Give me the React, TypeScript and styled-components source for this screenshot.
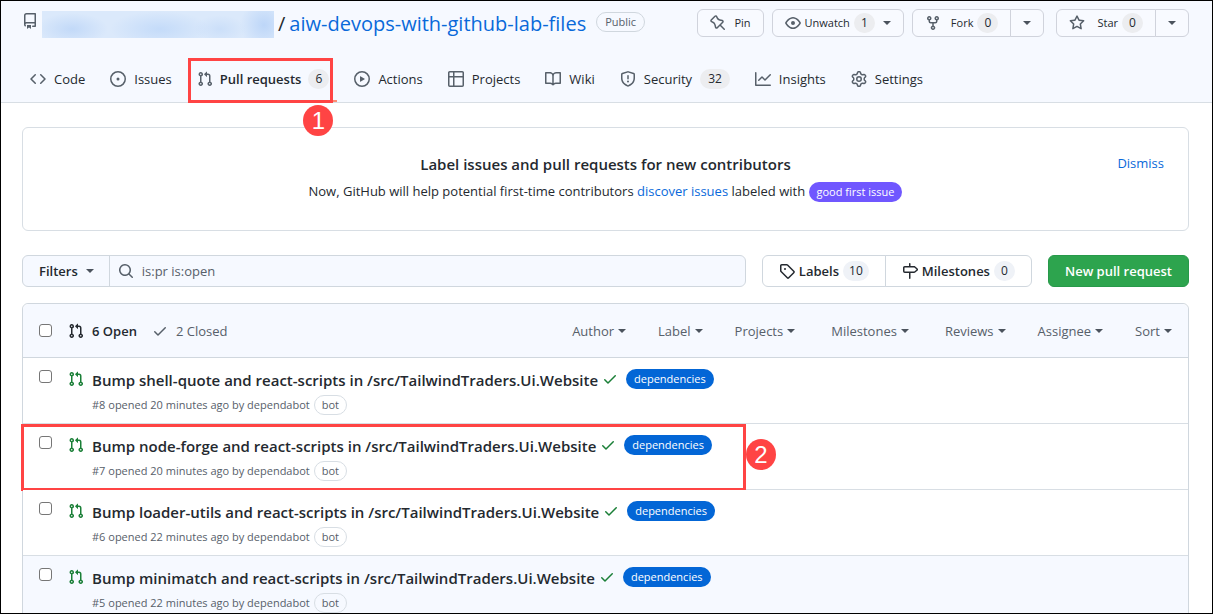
import React from "react";
import styled, { createGlobalStyle } from "styled-components";

const GlobalStyle = createGlobalStyle`
  *, *::before, *::after { box-sizing: border-box; }
  body {
    margin: 0;
    background: #ffffff;
    color: #24292f;
    font-family: "Open Sans", "Noto Sans", sans-serif;
    font-size: 13px;
    line-height: 20px;
  }
  button, input { font: inherit; color: inherit; }
  a { text-decoration: none; }
  h1, h2, h3, p, ul { margin: 0; padding: 0; font-size: inherit; }
  ul { list-style: none; }
`;

const icons = {
  repo: "M2 2.5A2.5 2.5 0 014.5 0h8.75a.75.75 0 01.75.75v12.5a.75.75 0 01-.75.75h-2.5a.75.75 0 110-1.5h1.75v-2h-8a1 1 0 00-.714 1.7.75.75 0 01-1.072 1.05A2.495 2.495 0 012 11.5v-9zm10.5-1V9h-8c-.356 0-.694.074-1 .208V2.5a1 1 0 011-1h8zM5 12.25v3.25a.25.25 0 00.4.2l1.45-1.087a.25.25 0 01.3 0L8.6 15.7a.25.25 0 00.4-.2v-3.25a.25.25 0 00-.25-.25h-3.5a.25.25 0 00-.25.25z",
  code: "M4.72 3.22a.75.75 0 011.06 1.06L2.06 8l3.72 3.72a.75.75 0 11-1.06 1.06L.47 8.53a.75.75 0 010-1.06l4.25-4.25zm6.56 0a.75.75 0 10-1.06 1.06L13.94 8l-3.72 3.72a.75.75 0 101.06 1.06l4.25-4.25a.75.75 0 000-1.06l-4.25-4.25z",
  issue: "M8 9.5a1.5 1.5 0 100-3 1.5 1.5 0 000 3zM8 0a8 8 0 100 16A8 8 0 008 0zM1.5 8a6.5 6.5 0 1113 0 6.5 6.5 0 01-13 0z",
  pull: "M7.177 3.073L9.573.677A.25.25 0 0110 .854v4.792a.25.25 0 01-.427.177L7.177 3.427a.25.25 0 010-.354zM3.75 2.5a.75.75 0 100 1.5.75.75 0 000-1.5zm-2.25.75a2.25 2.25 0 113 2.122v5.256a2.251 2.251 0 11-1.5 0V5.372A2.25 2.25 0 011.5 3.25zM11 2.5h-1V4h1a1 1 0 011 1v5.628a2.251 2.251 0 101.5 0V5A2.5 2.5 0 0011 2.5zm1 10.25a.75.75 0 111.5 0 .75.75 0 01-1.5 0zM3.75 12a.75.75 0 100 1.5.75.75 0 000-1.5z",
  play: "M1.5 8a6.5 6.5 0 1113 0 6.5 6.5 0 01-13 0zM8 0a8 8 0 100 16A8 8 0 008 0zM6.379 5.227A.25.25 0 006 5.442v5.117a.25.25 0 00.379.214l4.264-2.559a.25.25 0 000-.428L6.379 5.227z",
  table: "M0 1.75C0 .784.784 0 1.75 0h12.5C15.216 0 16 .784 16 1.75v12.5A1.75 1.75 0 0114.25 16H1.75A1.75 1.75 0 010 14.25V1.75zM1.5 6.5v7.75c0 .138.112.25.25.25H5v-8H1.5zM5 5H1.5V1.75a.25.25 0 01.25-.25H5V5zm1.5 1.5v8h7.75a.25.25 0 00.25-.25V6.5h-8zm8-1.5h-8V1.5h7.75a.25.25 0 01.25.25V5z",
  book: "M0 1.75A.75.75 0 01.75 1h4.253c1.227 0 2.317.59 3 1.501A3.744 3.744 0 0111.006 1h4.245a.75.75 0 01.75.75v10.5a.75.75 0 01-.75.75h-4.507a2.25 2.25 0 00-1.591.659l-.622.621a.75.75 0 01-1.06 0l-.622-.621A2.25 2.25 0 005.258 13H.75a.75.75 0 01-.75-.75V1.75zm8.755 3a2.25 2.25 0 012.25-2.25H14.5v9h-3.757c-.71 0-1.4.201-1.992.572l.004-7.322zm-1.504 7.324l.004-5.073-.002-2.253A2.25 2.25 0 005.003 2.5H1.5v9h3.757a3.75 3.75 0 011.994.574z",
  shield: "M7.467.133a1.75 1.75 0 011.066 0l5.25 1.68A1.75 1.75 0 0115 3.48V7c0 1.566-.32 3.182-1.303 4.682-.983 1.498-2.585 2.813-5.032 3.855a1.7 1.7 0 01-1.33 0c-2.447-1.042-4.049-2.357-5.032-3.855C1.32 10.182 1 8.566 1 7V3.48a1.75 1.75 0 011.217-1.667l5.25-1.68zm.61 1.429a.25.25 0 00-.153 0l-5.25 1.68a.25.25 0 00-.174.238V7c0 1.358.275 2.666 1.057 3.86.784 1.194 2.121 2.34 4.366 3.297a.2.2 0 00.154 0c2.245-.956 3.582-2.104 4.366-3.298C13.225 9.666 13.5 8.36 13.5 7V3.48a.25.25 0 00-.174-.237l-5.25-1.68zM9 10.5a1 1 0 11-2 0 1 1 0 012 0zM8.75 4.75a.75.75 0 10-1.5 0v3a.75.75 0 001.5 0v-3z",
  graph: "M1.5 1.75a.75.75 0 00-1.5 0v12.5c0 .414.336.75.75.75h14.5a.75.75 0 000-1.5H1.5V1.75zm14.28 2.53a.75.75 0 00-1.06-1.06L10 7.94 7.53 5.47a.75.75 0 00-1.06 0L3.22 8.72a.75.75 0 001.06 1.06L7 7.06l2.47 2.47a.75.75 0 001.06 0l5.25-5.25z",
  gear: "M7.429 1.525a6.593 6.593 0 011.142 0c.036.003.108.036.137.146l.289 1.105c.147.56.55.967.997 1.189.174.086.341.183.501.29.417.278.97.423 1.53.27l1.102-.303c.11-.03.175.016.195.046.219.31.41.641.573.989.014.031.022.11-.059.19l-.815.806c-.411.406-.562.957-.53 1.456a4.588 4.588 0 010 .582c-.032.499.119 1.05.53 1.456l.815.806c.08.08.073.159.059.19a6.494 6.494 0 01-.573.99c-.02.029-.086.074-.195.045l-1.103-.303c-.559-.153-1.112-.008-1.529.27-.16.107-.327.204-.5.29-.449.222-.851.628-.998 1.189l-.289 1.105c-.029.11-.101.143-.137.146a6.613 6.613 0 01-1.142 0c-.036-.003-.108-.037-.137-.146l-.289-1.105c-.147-.56-.55-.967-.997-1.189a4.502 4.502 0 01-.501-.29c-.417-.278-.97-.423-1.53-.27l-1.102.303c-.11.03-.175-.016-.195-.046a6.492 6.492 0 01-.573-.989c-.014-.031-.022-.11.059-.19l.815-.806c.411-.406.562-.957.53-1.456a4.587 4.587 0 010-.582c.032-.499-.119-1.05-.53-1.456l-.815-.806c-.08-.08-.073-.159-.059-.19a6.44 6.44 0 01.573-.99c.02-.029.086-.075.195-.045l1.103.303c.559.153 1.112.008 1.529-.27.16-.107.327-.204.5-.29.449-.222.851-.628.998-1.189l.289-1.105c.029-.11.101-.143.137-.146zM8 0c-.236 0-.47.01-.701.03-.743.065-1.29.615-1.458 1.261l-.29 1.106c-.017.066-.078.158-.211.224a5.994 5.994 0 00-.668.386c-.123.082-.233.09-.3.071L3.27 2.776c-.644-.177-1.392.02-1.82.63a7.977 7.977 0 00-.704 1.217c-.315.675-.111 1.422.363 1.891l.815.806c.05.048.098.147.088.294a6.084 6.084 0 000 .772c.01.147-.038.246-.088.294l-.815.806c-.474.469-.678 1.216-.363 1.891.2.428.436.835.704 1.218.428.609 1.176.806 1.82.63l1.103-.303c.066-.019.176-.011.299.071.213.143.436.272.668.386.133.066.194.158.212.224l.289 1.106c.169.646.715 1.196 1.458 1.26a8.094 8.094 0 001.402 0c.743-.064 1.29-.614 1.458-1.26l.29-1.106c.017-.066.078-.158.211-.224a5.98 5.98 0 00.668-.386c.123-.082.233-.09.3-.071l1.102.302c.644.177 1.392-.02 1.82-.63.268-.382.505-.789.704-1.217.315-.675.111-1.422-.364-1.891l-.814-.806c-.05-.048-.098-.147-.088-.294a6.1 6.1 0 000-.772c-.01-.147.039-.246.088-.294l.814-.806c.475-.469.679-1.216.364-1.891a7.992 7.992 0 00-.704-1.218c-.428-.609-1.176-.806-1.82-.63l-1.103.303c-.066.019-.176.011-.299-.071a5.991 5.991 0 00-.668-.386c-.133-.066-.194-.158-.212-.224L10.16 1.29C9.99.645 9.444.095 8.701.031A8.094 8.094 0 008 0zm1.5 8a1.5 1.5 0 11-3 0 1.5 1.5 0 013 0zM11 8a3 3 0 11-6 0 3 3 0 016 0z",
  pin: "M4.456.734a1.75 1.75 0 012.826.504l.613 1.327a3.081 3.081 0 002.084 1.707l2.454.584c1.332.317 1.8 1.972.832 2.94L11.06 10l3.72 3.72a.75.75 0 11-1.061 1.06L10 11.06l-2.204 2.205c-.968.968-2.623.5-2.94-.832l-.584-2.454a3.081 3.081 0 00-1.707-2.084l-1.327-.613a1.75 1.75 0 01-.504-2.826L4.456.734zM5.92 1.866a.25.25 0 00-.404-.072L1.794 5.516a.25.25 0 00.072.404l1.328.613A4.582 4.582 0 015.73 9.63l.584 2.454a.25.25 0 00.42.12l5.47-5.47a.25.25 0 00-.12-.42L9.63 5.73a4.581 4.581 0 01-3.098-2.537L5.92 1.866z",
  eye: "M1.679 7.932c.412-.621 1.242-1.75 2.366-2.717C5.175 4.242 6.527 3.5 8 3.5c1.473 0 2.824.742 3.955 1.715 1.124.967 1.954 2.096 2.366 2.717a.119.119 0 010 .136c-.412.621-1.242 1.75-2.366 2.717C10.825 11.758 9.473 12.5 8 12.5c-1.473 0-2.824-.742-3.955-1.715C2.92 9.818 2.09 8.69 1.679 8.068a.119.119 0 010-.136zM8 2c-1.981 0-3.67.992-4.933 2.078C1.797 5.169.88 6.423.43 7.1a1.619 1.619 0 000 1.798c.45.678 1.367 1.932 2.637 3.024C4.329 13.008 6.019 14 8 14c1.981 0 3.67-.992 4.933-2.078 1.27-1.091 2.187-2.345 2.637-3.023a1.619 1.619 0 000-1.798c-.45-.678-1.367-1.932-2.637-3.023C11.671 2.992 9.981 2 8 2zm0 8a2 2 0 100-4 2 2 0 000 4z",
  fork: "M5 3.25a.75.75 0 11-1.5 0 .75.75 0 011.5 0zm0 2.122a2.25 2.25 0 10-1.5 0v.878A2.25 2.25 0 005.75 8.5h1.5v2.128a2.251 2.251 0 101.5 0V8.5h1.5a2.25 2.25 0 002.25-2.25v-.878a2.25 2.25 0 10-1.5 0v.878a.75.75 0 01-.75.75h-4.5A.75.75 0 015 6.25v-.878zm3.75 7.378a.75.75 0 11-1.5 0 .75.75 0 011.5 0zm3-8.75a.75.75 0 100-1.5.75.75 0 000 1.5z",
  star: "M8 .25a.75.75 0 01.673.418l1.882 3.815 4.21.612a.75.75 0 01.416 1.279l-3.046 2.97.719 4.192a.75.75 0 01-1.088.791L8 12.347l-3.766 1.98a.75.75 0 01-1.088-.79l.72-4.194L.818 6.374a.75.75 0 01.416-1.28l4.21-.611L7.327.668A.75.75 0 018 .25zm0 2.445L6.615 5.5a.75.75 0 01-.564.41l-3.097.45 2.24 2.184a.75.75 0 01.216.664l-.528 3.084 2.769-1.456a.75.75 0 01.698 0l2.77 1.456-.53-3.084a.75.75 0 01.216-.664l2.24-2.183-3.096-.45a.75.75 0 01-.564-.41L8 2.694v.001z",
  search: "M11.5 7a4.499 4.499 0 11-8.998 0A4.499 4.499 0 0111.5 7zm-.82 4.74a6 6 0 111.06-1.06l3.04 3.04a.75.75 0 11-1.06 1.06l-3.04-3.04z",
  check: "M13.78 4.22a.75.75 0 010 1.06l-7.25 7.25a.75.75 0 01-1.06 0L2.22 9.28a.75.75 0 011.06-1.06L6 10.94l6.72-6.72a.75.75 0 011.06 0z",
  tag: "M2.5 7.775V2.75a.25.25 0 01.25-.25h5.025a.25.25 0 01.177.073l6.25 6.25a.25.25 0 010 .354l-5.025 5.025a.25.25 0 01-.354 0l-6.25-6.25a.25.25 0 01-.073-.177zm-1.5 0V2.75C1 1.784 1.784 1 2.75 1h5.025c.464 0 .91.184 1.238.513l6.25 6.25a1.75 1.75 0 010 2.474l-5.026 5.026a1.75 1.75 0 01-2.474 0l-6.25-6.25A1.75 1.75 0 011 7.775zM6 5a1 1 0 100 2 1 1 0 000-2z",
  milestone: "M7.75 0a.75.75 0 01.75.75V3h3.634c.414 0 .814.147 1.13.414l2.07 1.75a1.75 1.75 0 010 2.672l-2.07 1.75a1.75 1.75 0 01-1.13.414H8.5v5.25a.75.75 0 11-1.5 0V10H2.75A1.75 1.75 0 011 8.25v-3.5C1 3.784 1.784 3 2.75 3H7V.75A.75.75 0 017.75 0zm0 8.5h4.384a.25.25 0 00.161-.06l2.07-1.75a.25.25 0 000-.38l-2.07-1.75a.25.25 0 00-.161-.06H2.75a.25.25 0 00-.25.25v3.5c0 .138.112.25.25.25h5z",
};

type IconName = keyof typeof icons;

const Svg = styled.svg<{ $color: string }>`
  flex: none;
  display: block;
  fill: ${(p) => p.$color};
  fill-rule: evenodd;
`;

const Icon = ({ name, size = 16, color = "#57606a" }: { name: IconName; size?: number; color?: string }) => (
  <Svg $color={color} width={size} height={size} viewBox="0 0 16 16" aria-hidden="true">
    <path d={icons[name]} />
  </Svg>
);

const Caret = styled.span`
  flex: none;
  border: 4px solid transparent;
  border-top-color: #4b535d;
  border-bottom-width: 0;
`;

const Page = styled.div`
  height: 100vh;
  overflow: hidden;
  border: 1px solid #000000;
`;

const Header = styled.header`
  background: #f6f9ff;
  border-bottom: 1px solid #d8dee4;
`;

const TitleBar = styled.div`
  display: flex;
  align-items: flex-start;
  justify-content: space-between;
  padding: 8px 23px 0 21px;
  height: 56px;
`;

const RepoTitle = styled.h1`
  display: flex;
  align-items: center;
  height: 30px;
  font-size: 20px;
  font-weight: 400;
`;

const RepoIcon = styled.span`
  align-self: flex-start;
  padding-top: 4px;
`;

const HiddenOwner = styled.span`
  width: 232px;
  height: 27px;
  margin: 0 4px;
  background:
    radial-gradient(ellipse 36px 16px at 30px 18px, #c2d9f8, transparent),
    radial-gradient(ellipse 50px 18px at 118px 18px, #c4dbf9, transparent),
    radial-gradient(ellipse 26px 14px at 178px 18px, #cbdff9, transparent),
    radial-gradient(ellipse 24px 24px at 222px 14px, #bdd6f8, transparent),
    #dbe9fb;
`;

const Link = styled.a`
  color: #0969da;
`;

const RepoName = styled(Link)`
  margin-left: 4px;
  font-weight: 500;
`;

const Visibility = styled.span`
  display: inline-flex;
  align-items: center;
  align-self: flex-start;
  height: 20px;
  margin: 3px 0 0 10px;
  padding: 0 8px;
  border: 1px solid #d0d7de;
  border-radius: 10px;
  color: #57606a;
  font-size: 11px;
`;

const Actions = styled.div`
  display: flex;
  gap: 8px;
`;

const ButtonGroup = styled.div<{ $spaced?: boolean }>`
  display: flex;
  margin-left: ${(p) => (p.$spaced ? "4px" : "0")};

  & > * + * { margin-left: -1px; }
  & > :not(:first-child) { border-top-left-radius: 0; border-bottom-left-radius: 0; }
  & > :not(:last-child) { border-top-right-radius: 0; border-bottom-right-radius: 0; }
`;

const SmallButton = styled.button<{ $iconGap?: number }>`
  display: flex;
  align-items: center;
  gap: 4px;
  height: 28px;
  padding: 0 12px;
  border: 1px solid #d0d3dc;
  border-radius: 6px;
  background: #f8faff;
  font-size: 11px;
  font-weight: 500;

  & > svg { margin-right: ${(p) => p.$iconGap ?? 0}px; }
`;

const SplitButton = styled(SmallButton)`
  width: 34px;
  justify-content: center;
`;

const Counter = styled.span<{ $bg?: string; $pad?: number; $after?: number }>`
  min-width: 21px;
  height: 20px;
  padding: 0 ${(p) => p.$pad ?? 6}px;
  margin-right: ${(p) => p.$after ?? 0}px;
  border-radius: 10px;
  background: ${(p) => p.$bg ?? "#ecedf0"};
  font-size: 12px;
  font-weight: 500;
  line-height: 20px;
  text-align: center;
`;

const Tabs = styled.nav`
  display: flex;
  gap: 9px;
  padding: 0 21px;
`;

const Tab = styled.a<{ $active?: boolean }>`
  position: relative;
  display: flex;
  align-items: center;
  gap: ${(p) => (p.$active ? 7 : 8)}px;
  height: 45px;
  padding: 0 8px;
  color: #24292f;
  font-weight: ${(p) => (p.$active ? 600 : 400)};
  border-bottom: 2px solid ${(p) => (p.$active ? "#fd8c73" : "transparent")};
`;

const TabFrame = styled.span`
  position: absolute;
  inset: 1px 4px -3px -1px;
  border: 3px solid #ff4444;
`;

const Marker = styled.span<{ $right: number; $top: number }>`
  position: absolute;
  z-index: 1;
  right: ${(p) => p.$right}px;
  top: ${(p) => p.$top}px;
  width: 30px;
  height: 31px;
  border-radius: 50%;
  background: #ff4444;
  color: #ffffff;
  font-family: "Liberation Sans", sans-serif;
  font-size: 24px;
  font-weight: 400;
  line-height: 31px;
  text-align: center;
`;

const Main = styled.main`
  padding: 24px 23px 0 21px;
`;

const Banner = styled.section`
  display: grid;
  grid-template-columns: 1fr auto 1fr;
  align-items: start;
  height: 104px;
  padding: 25px 24px;
  border: 1px solid #d8dee4;
  border-radius: 6px;
`;

const BannerText = styled.div`
  grid-column: 2;
  text-align: center;
`;

const BannerTitle = styled.h2`
  font-size: 15px;
  font-weight: 600;
  line-height: 22px;
`;

const BannerLine = styled.p`
  margin-top: 6px;
`;

const Dismiss = styled.button`
  justify-self: end;
  padding: 0;
  border: 0;
  background: none;
  color: #0969da;
`;

const Label = styled.span<{ $bg: string }>`
  display: inline-block;
  height: 20px;
  padding: 0 8px;
  border-radius: 10px;
  background: ${(p) => p.$bg};
  color: #ffffff;
  font-size: 11px;
  font-weight: 500;
  line-height: 19px;
`;

const Toolbar = styled.div`
  display: flex;
  gap: 16px;
  margin: 24px 0 16px;
`;

const SearchGroup = styled.form`
  display: flex;
  flex: 1;
  height: 32px;
  border: 1px solid #d0d7de;
  border-radius: 6px;
  background: #f6f9ff;
  overflow: hidden;
`;

const FiltersButton = styled.button`
  display: flex;
  align-items: center;
  gap: 8px;
  padding: 0 15px 0 16px;
  border: 0;
  border-right: 1px solid #d0d7de;
  background: none;
  font-weight: 600;
`;

const SearchLabel = styled.label`
  display: flex;
  flex: 1;
  align-items: center;
  gap: 8px;
  padding-left: 8px;
`;

const SearchInput = styled.input`
  flex: 1;
  border: 0;
  padding: 0;
  outline: 0;
  background: none;
  color: #57606a;
`;

const ToolLink = styled.a`
  display: flex;
  align-items: center;
  gap: 4px;
  height: 32px;
  padding: 0 16px;
  border: 1px solid #d0d7de;
  border-radius: 6px;
  color: #24292f;
  font-weight: 600;
`;

const NewButton = styled.button`
  height: 32px;
  padding: 0 16px;
  border: 1px solid #27994a;
  border-radius: 6px;
  background: #2da44e;
  color: #ffffff;
  font-weight: 600;
`;

const List = styled.section`
  border: 1px solid #d0d7de;
  border-radius: 6px 6px 0 0;
`;

const ListHeader = styled.div`
  display: flex;
  align-items: center;
  height: 54px;
  padding: 0 16px;
  border-bottom: 1px solid #d0d7de;
  border-radius: 6px 6px 0 0;
  background: #f6f9ff;
`;

const Checkbox = styled.input`
  appearance: none;
  flex: none;
  width: 13px;
  height: 13px;
  margin: 0;
  border: 1px solid #767676;
  border-radius: 3px;
  background: #ffffff;
`;

const States = styled.div`
  display: flex;
  gap: 15px;
  margin-left: 16px;
`;

const StateLink = styled.a<{ $active?: boolean }>`
  display: flex;
  align-items: center;
  gap: 8px;
  color: ${(p) => (p.$active ? "#24292f" : "#57606a")};
  font-weight: ${(p) => (p.$active ? 600 : 400)};
`;

const Menus = styled.div`
  display: flex;
  gap: 32px;
  margin-left: auto;
`;

const MenuButton = styled.button<{ $wide?: boolean }>`
  display: flex;
  align-items: center;
  gap: 4px;
  margin: 0 ${(p) => (p.$wide ? 4 : 0)}px;
  padding: 0;
  border: 0;
  background: none;
  color: #57606a;
`;

const Row = styled.li<{ $tinted?: boolean }>`
  position: relative;
  display: flex;
  align-items: flex-start;
  height: 66px;
  padding: 11px 16px 0;
  border-bottom: 1px solid #d8dee4;
  background: ${(p) => (p.$tinted ? "#f6f9ff" : "#ffffff")};

  & > ${Checkbox} { margin-top: 1px; }
`;

const RowIcon = styled.span`
  margin: 2px 8px 0 16px;
`;

const RowTitle = styled.h3`
  display: flex;
  align-items: center;
  height: 20px;
  gap: 4px;
  font-size: 15px;
  font-weight: 600;
`;

const TitleLink = styled.a`
  padding-top: 2px;
  color: #24292f;
`;

const LabelSlot = styled.span`
  display: flex;
  margin-left: 4px;
`;

const Meta = styled.p`
  display: flex;
  align-items: center;
  gap: 4px;
  margin-top: 6px;
  color: #57606a;
  font-size: 11px;
`;

const Bot = styled.span`
  height: 20px;
  padding: 0 7px;
  border: 1px solid #d8dee4;
  border-radius: 10px;
  line-height: 18px;
`;

const RowFrame = styled.span`
  position: absolute;
  top: 0;
  bottom: -2px;
  left: -2px;
  width: 725px;
  border: 3px solid #ff4444;
`;

const tabs: { icon: IconName; text: string; count?: number; active?: boolean }[] = [
  { icon: "code", text: "Code" },
  { icon: "issue", text: "Issues" },
  { icon: "pull", text: "Pull requests", count: 6, active: true },
  { icon: "play", text: "Actions" },
  { icon: "table", text: "Projects" },
  { icon: "book", text: "Wiki" },
  { icon: "shield", text: "Security", count: 32 },
  { icon: "graph", text: "Insights" },
  { icon: "gear", text: "Settings" },
];

const menus = ["Author", "Label", "Projects", "Milestones", "Reviews", "Assignee", "Sort"];

const pulls = [
  { id: 8, pkg: "shell-quote", age: 20 },
  { id: 7, pkg: "node-forge", age: 20, framed: true },
  { id: 6, pkg: "loader-utils", age: 22 },
  { id: 5, pkg: "minimatch", age: 22, tinted: true },
];

export default function App() {
  return (
    <Page>
      <GlobalStyle />
      <Header>
        <TitleBar>
          <RepoTitle>
            <RepoIcon><Icon name="repo" /></RepoIcon>
            <HiddenOwner />
            <span>/</span>
            <RepoName href="#">aiw-devops-with-github-lab-files</RepoName>
            <Visibility>Public</Visibility>
          </RepoTitle>
          <Actions>
            <SmallButton $iconGap={4}><Icon name="pin" />Pin</SmallButton>
            <SmallButton>
              <Icon name="eye" />Unwatch<Counter $after={4}>1</Counter><Caret />
            </SmallButton>
            <ButtonGroup>
              <SmallButton $iconGap={6}>
                <Icon name="fork" />Fork<Counter>0</Counter>
              </SmallButton>
              <SplitButton aria-label="Fork options"><Caret /></SplitButton>
            </ButtonGroup>
            <ButtonGroup $spaced>
              <SmallButton $iconGap={8}>
                <Icon name="star" />Star<Counter>0</Counter>
              </SmallButton>
              <SplitButton aria-label="Star options"><Caret /></SplitButton>
            </ButtonGroup>
          </Actions>
        </TitleBar>
        <Tabs>
          {tabs.map((t) => (
            <Tab key={t.text} href="#" $active={t.active}>
              <Icon name={t.icon} />
              {t.text}
              {t.count !== undefined && <Counter $pad={t.count > 9 ? 8 : 6}>{t.count}</Counter>}
              {t.active && <TabFrame />}
              {t.active && <Marker $right={4} $top={48}>1</Marker>}
            </Tab>
          ))}
        </Tabs>
      </Header>

      <Main>
        <Banner>
          <BannerText>
            <BannerTitle>Label issues and pull requests for new contributors</BannerTitle>
            <BannerLine>
              Now, GitHub will help potential first-time contributors{" "}
              <Link href="#">discover issues</Link> labeled with{" "}
              <Label $bg="#7057ff">good first issue</Label>
            </BannerLine>
          </BannerText>
          <Dismiss>Dismiss</Dismiss>
        </Banner>

        <Toolbar>
          <SearchGroup>
            <FiltersButton type="button">Filters<Caret /></FiltersButton>
            <SearchLabel>
              <Icon name="search" />
              <SearchInput type="text" aria-label="Search pull requests" defaultValue="is:pr is:open" />
            </SearchLabel>
          </SearchGroup>
          <ButtonGroup>
            <ToolLink href="#">
              <Icon name="tag" color="#24292f" />Labels<Counter $bg="#eff2f7">10</Counter>
            </ToolLink>
            <ToolLink href="#">
              <Icon name="milestone" color="#24292f" />Milestones<Counter $bg="#eff2f7">0</Counter>
            </ToolLink>
          </ButtonGroup>
          <NewButton>New pull request</NewButton>
        </Toolbar>

        <List>
          <ListHeader>
            <Checkbox type="checkbox" aria-label="Select all pull requests" />
            <States>
              <StateLink href="#" $active><Icon name="pull" color="#24292f" />6 Open</StateLink>
              <StateLink href="#"><Icon name="check" />2 Closed</StateLink>
            </States>
            <Menus>
              {menus.map((m) => (
                <MenuButton key={m} $wide={m === "Milestones"}>{m}<Caret /></MenuButton>
              ))}
            </Menus>
          </ListHeader>
          <ul>
            {pulls.map((p) => (
              <Row key={p.id} $tinted={p.tinted}>
                <Checkbox type="checkbox" aria-label={`Select pull request ${p.id}`} />
                <RowIcon><Icon name="pull" color="#1a7f37" /></RowIcon>
                <div>
                  <RowTitle>
                    <TitleLink href="#">
                      Bump {p.pkg} and react-scripts in /src/TailwindTraders.Ui.Website
                    </TitleLink>
                    <Icon name="check" color="#1a7f37" />
                    <LabelSlot><Label $bg="#0366d6">dependencies</Label></LabelSlot>
                  </RowTitle>
                  <Meta>#{p.id} opened {p.age} minutes ago by dependabot<Bot>bot</Bot></Meta>
                </div>
                {p.framed && <RowFrame><Marker $right={-33} $top={12}>2</Marker></RowFrame>}
              </Row>
            ))}
          </ul>
        </List>
      </Main>
    </Page>
  );
}
